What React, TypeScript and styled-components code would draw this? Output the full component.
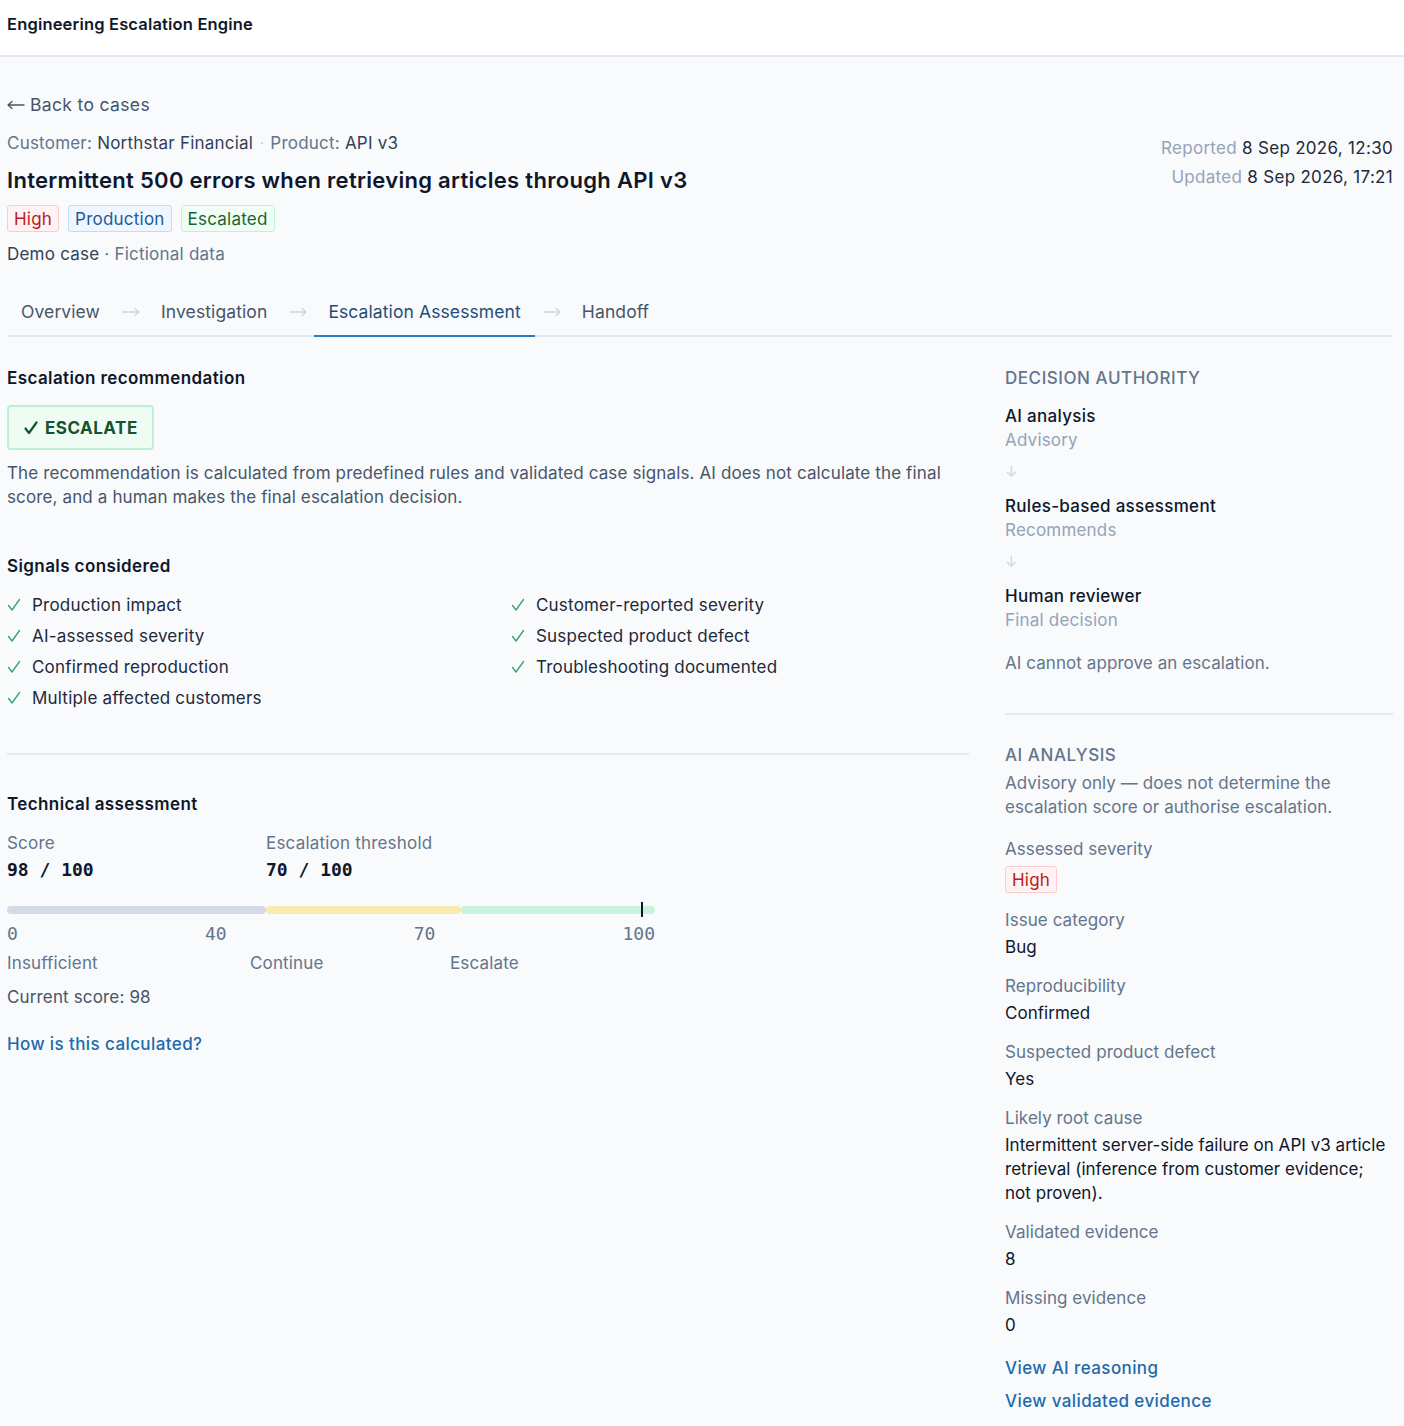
import React from 'react';
import styled, { createGlobalStyle, css } from 'styled-components';

const GlobalStyle = createGlobalStyle`
  * { box-sizing: border-box; }
  body {
    margin: 0;
    background: #f8fafc;
    font-family: Inter, "Noto Sans", sans-serif;
    font-size: 17px;
    line-height: 24px;
    letter-spacing: 0.15px;
    color: #0f172a;
  }
`;

const mono = `"DejaVu Sans Mono", "Liberation Mono", monospace`;

const TopBar = styled.header`
  background: #ffffff;
  border-bottom: 2px solid #e2e8f0;
  padding: 13px 11px 20px 7px;
  font-size: 16.5px;
  line-height: 22px;
  font-weight: 600;
  letter-spacing: 0.17px;
  color: #0f172a;
`;

const Page = styled.main`
  padding: 36px 11px 40px 7px;
`;

const BackLink = styled.a`
  display: flex;
  align-items: center;
  gap: 5px;
  color: #475569;
  text-decoration: none;
  font-size: 17.5px;
  letter-spacing: 0.35px;
`;

const ArrowSvg = styled.svg<{ $color: string }>`
  width: 18px;
  height: 10px;
  flex: none;
  stroke: ${({ $color }) => $color};
  fill: none;
  stroke-width: 1.3;
  stroke-linecap: round;
  stroke-linejoin: round;
`;

const CaseHead = styled.div`
  display: flex;
  justify-content: space-between;
  align-items: flex-start;
  margin-top: 14px;
`;

const CaseInfo = styled.div`
  display: flex;
  flex-direction: column;
  gap: 10px;
`;

const Meta = styled.div`
  color: #334155;
  letter-spacing: 0.22px;
`;

const MetaLabel = styled.span`
  color: #64748b;
`;

const Dot = styled.span`
  color: #cbd5e1;
  margin: 0 6px;
`;

const Title = styled.h1`
  margin: 0;
  font-size: 22px;
  line-height: 30px;
  font-weight: 600;
  letter-spacing: 0.3px;
  color: #0f172a;
`;

const Badges = styled.div`
  display: flex;
  gap: 9px;
`;

type Tone = 'red' | 'blue' | 'green';

const toneMap: Record<Tone, { bg: string; border: string; fg: string }> = {
  red: { bg: '#fef2f2', border: '#fecaca', fg: '#b91c1c' },
  blue: { bg: '#eff6ff', border: '#bfdbfe', fg: '#1e5a96' },
  green: { bg: '#f0fdf4', border: '#bbf7d0', fg: '#166534' },
};

const Badge = styled.span<{ $tone: Tone }>`
  display: inline-flex;
  align-items: center;
  height: 27px;
  padding: 0 6px;
  border-radius: 3px;
  font-size: 17px;
  letter-spacing: 0.22px;
  ${({ $tone }) => css`
    background: ${toneMap[$tone].bg};
    border: 1px solid ${toneMap[$tone].border};
    color: ${toneMap[$tone].fg};
  `}
`;

const DemoLine = styled.div`
  color: #64748b;
  letter-spacing: 0.22px;
`;

const DemoStrong = styled.span`
  color: #334155;
`;

const Dates = styled.div`
  display: flex;
  flex-direction: column;
  align-items: flex-end;
  gap: 5px;
  margin-top: 5px;
  color: #1e293b;
  letter-spacing: 0.3px;
`;

const DateLabel = styled.span`
  color: #94a3b8;
`;

const Tabs = styled.nav`
  display: flex;
  align-items: center;
  margin-top: 22px;
  border-bottom: 2px solid #e2e8f0;
`;

const Tab = styled.a<{ $active?: boolean }>`
  padding: 12px 14px 11px;
  margin-bottom: -2px;
  font-size: 17.5px;
  line-height: 24px;
  letter-spacing: 0.1px;
  text-decoration: none;
  color: ${({ $active }) => ($active ? '#1e4e79' : '#475569')};
  border-bottom: 2px solid ${({ $active }) => ($active ? '#2b7bc4' : 'transparent')};
`;

const TabArrow = styled.span`
  display: flex;
  margin: 0 7px 0 8px;
`;

const Body = styled.div`
  display: grid;
  grid-template-columns: 1fr 388px;
  gap: 36px;
  padding-top: 29px;
`;

const Left = styled.section`
  display: flex;
  flex-direction: column;
`;

const SectionTitle = styled.h2<{ $mt?: number }>`
  margin: ${({ $mt }) => $mt ?? 0}px 0 0;
  font-size: 17px;
  line-height: 24px;
  font-weight: 600;
  letter-spacing: 0.4px;
  color: #0f172a;
`;

const Verdict = styled.div`
  align-self: flex-start;
  margin-top: 15px;
  height: 45px;
  padding: 0 14px 0 15px;
  display: flex;
  align-items: center;
  gap: 7px;
  border: 2px solid #bbf0d3;
  border-radius: 4px;
  background: #effcf4;
  color: #14532d;
  font-weight: 700;
  font-size: 17px;
  letter-spacing: 0.5px;
`;

const CheckSvg = styled.svg<{ $color: string; $weight: number }>`
  width: 14px;
  height: 14px;
  flex: none;
  fill: none;
  stroke: ${({ $color }) => $color};
  stroke-width: ${({ $weight }) => $weight};
  stroke-linecap: round;
  stroke-linejoin: round;
`;

const Desc = styled.p`
  margin: 11px 0 0;
  color: #475569;
  letter-spacing: 0.13px;
`;

const Signals = styled.ul`
  list-style: none;
  margin: 15px 0 0;
  padding: 0;
  display: grid;
  grid-template-columns: 1fr 1fr;
  column-gap: 46px;
  row-gap: 7px;
`;

const Signal = styled.li`
  display: flex;
  align-items: center;
  gap: 11px;
  color: #1e293b;
  letter-spacing: 0.2px;
`;

const Divider = styled.hr<{ $mt: number; $mb: number }>`
  border: 0;
  border-top: 2px solid #e2e8f0;
  margin: ${({ $mt, $mb }) => `${$mt}px 0 ${$mb}px`};
`;

const Scores = styled.div`
  display: grid;
  grid-template-columns: 259px auto;
  margin-top: 15px;
`;

const ScoreLabel = styled.div`
  color: #64748b;
  letter-spacing: 0.2px;
`;

const ScoreValue = styled.div`
  margin-top: 3px;
  font-family: ${mono};
  font-weight: 700;
  font-size: 18px;
  letter-spacing: 0;
  color: #0f172a;
`;

const Meter = styled.div`
  width: 648px;
  margin-top: 24px;
`;

const Track = styled.div`
  position: relative;
  display: flex;
  height: 8px;
`;

const Zone = styled.div<{ $color: string; $w: number }>`
  width: ${({ $w }) => $w}%;
  background: ${({ $color }) => $color};
  border-radius: 4px;
`;

const Marker = styled.div`
  position: absolute;
  top: -4px;
  width: 2px;
  height: 15px;
  background: #0f172a;
  transform: translateX(-1px);
`;

const Ticks = styled.div`
  display: flex;
  justify-content: space-between;
  margin-top: 8px;
  font-family: ${mono};
  font-size: 18px;
  letter-spacing: 0;
  color: #64748b;
`;

const ZoneLabels = styled.div`
  display: grid;
  grid-template-columns: 243px 200px auto;
  margin-top: 5px;
  color: #64748b;
`;

const Current = styled.div`
  margin-top: 10px;
  color: #475569;
`;

const Link = styled.a<{ $mt: number }>`
  display: block;
  margin-top: ${({ $mt }) => $mt}px;
  color: #1d6aad;
  text-decoration: none;
  font-size: 17px;
  font-weight: 500;
  letter-spacing: 0.4px;
`;

const Right = styled.aside`
  display: flex;
  flex-direction: column;
  letter-spacing: 0.07px;
`;

const Eyebrow = styled.h3`
  margin: 0;
  font-size: 17px;
  line-height: 24px;
  font-weight: 500;
  letter-spacing: 0.55px;
  text-transform: uppercase;
  color: #64748b;
`;

const Authority = styled.div`
  display: flex;
  flex-direction: column;
  margin-top: 14px;
  gap: 8px;
`;

const Step = styled.div`
  display: flex;
  flex-direction: column;
`;

const StepName = styled.div`
  font-weight: 500;
  letter-spacing: 0.3px;
  color: #0f172a;
`;

const StepRole = styled.div`
  color: #94a3b8;
  letter-spacing: 0.2px;
`;

const DownArrow = styled.div`
  color: #cbd5e1;
  font-size: 15px;
  margin-bottom: 2px;
`;

const Note = styled.div<{ $mt: number }>`
  margin-top: ${({ $mt }) => $mt}px;
  color: #64748b;
`;

const Fields = styled.dl`
  margin: 18px 0 0;
  display: flex;
  flex-direction: column;
  gap: 15px;
`;

const Field = styled.div`
  display: flex;
  flex-direction: column;
  align-items: flex-start;
  gap: 3px;
`;

const FieldLabel = styled.dt`
  color: #64748b;
`;

const FieldValue = styled.dd`
  margin: 0;
  color: #0f172a;
  letter-spacing: 0.03px;
`;

const RightArrow = ({ color }: { color: string }) => (
  <ArrowSvg $color={color} viewBox="0 0 18 10">
    <path d="M1 5h16M13 1.5L17 5l-4 3.5" />
  </ArrowSvg>
);

const LeftArrow = ({ color }: { color: string }) => (
  <ArrowSvg $color={color} viewBox="0 0 18 10">
    <path d="M17 5H1M5 1.5L1 5l4 3.5" />
  </ArrowSvg>
);

const Tick = ({ color, weight }: { color: string; weight: number }) => (
  <CheckSvg $color={color} $weight={weight} viewBox="0 0 14 14">
    <path d="M1.5 7.5L5 12L12.5 1.5" />
  </CheckSvg>
);

const signals = [
  'Production impact',
  'Customer-reported severity',
  'AI-assessed severity',
  'Suspected product defect',
  'Confirmed reproduction',
  'Troubleshooting documented',
  'Multiple affected customers',
];

const fields: { label: string; value: string }[] = [
  { label: 'Issue category', value: 'Bug' },
  { label: 'Reproducibility', value: 'Confirmed' },
  { label: 'Suspected product defect', value: 'Yes' },
  {
    label: 'Likely root cause',
    value: 'Intermittent server-side failure on API v3 article retrieval (inference from customer evidence; not proven).',
  },
  { label: 'Validated evidence', value: '8' },
  { label: 'Missing evidence', value: '0' },
];

const tabs = ['Overview', 'Investigation', 'Escalation Assessment', 'Handoff'];
const activeTab = 'Escalation Assessment';
const score = 98;

export default function App() {
  return (
    <>
      <GlobalStyle />
      <TopBar>Engineering Escalation Engine</TopBar>
      <Page>
        <BackLink href="#">
          <LeftArrow color="#475569" />
          Back to cases
        </BackLink>
        <CaseHead>
          <CaseInfo>
            <Meta>
              <MetaLabel>Customer:</MetaLabel> Northstar Financial
              <Dot>·</Dot>
              <MetaLabel>Product:</MetaLabel> API v3
            </Meta>
            <Title>Intermittent 500 errors when retrieving articles through API v3</Title>
            <Badges>
              <Badge $tone="red">High</Badge>
              <Badge $tone="blue">Production</Badge>
              <Badge $tone="green">Escalated</Badge>
            </Badges>
            <DemoLine>
              <DemoStrong>Demo case</DemoStrong> · Fictional data
            </DemoLine>
          </CaseInfo>
          <Dates>
            <div>
              <DateLabel>Reported</DateLabel> 8 Sep 2026, 12:30
            </div>
            <div>
              <DateLabel>Updated</DateLabel> 8 Sep 2026, 17:21
            </div>
          </Dates>
        </CaseHead>

        <Tabs>
          {tabs.map((t, i) => (
            <React.Fragment key={t}>
              {i > 0 && (
                <TabArrow>
                  <RightArrow color="#cbd5e1" />
                </TabArrow>
              )}
              <Tab href="#" $active={t === activeTab}>
                {t}
              </Tab>
            </React.Fragment>
          ))}
        </Tabs>

        <Body>
          <Left>
            <SectionTitle>Escalation recommendation</SectionTitle>
            <Verdict>
              <Tick color="#14532d" weight={2.2} />
              ESCALATE
            </Verdict>
            <Desc>
              The recommendation is calculated from predefined rules and validated case signals. AI does not calculate the final score, and a human makes the final escalation decision.
            </Desc>

            <SectionTitle $mt={45}>Signals considered</SectionTitle>
            <Signals>
              {signals.map((s) => (
                <Signal key={s}>
                  <Tick color="#3aa56f" weight={1.4} />
                  {s}
                </Signal>
              ))}
            </Signals>

            <Divider $mt={43} $mb={37} />

            <SectionTitle>Technical assessment</SectionTitle>
            <Scores>
              <div>
                <ScoreLabel>Score</ScoreLabel>
                <ScoreValue>98 / 100</ScoreValue>
              </div>
              <div>
                <ScoreLabel>Escalation threshold</ScoreLabel>
                <ScoreValue>70 / 100</ScoreValue>
              </div>
            </Scores>

            <Meter>
              <Track>
                <Zone $w={40} $color="#d5dbe6" />
                <Zone $w={30} $color="#f8e9b0" />
                <Zone $w={30} $color="#c8f3dc" />
                <Marker style={{ left: `${score}%` }} />
              </Track>
              <Ticks>
                <span>0</span>
                <span>40</span>
                <span>70</span>
                <span>100</span>
              </Ticks>
              <ZoneLabels>
                <span>Insufficient</span>
                <span>Continue</span>
                <span>Escalate</span>
              </ZoneLabels>
            </Meter>
            <Current>Current score: {score}</Current>
            <Link href="#" $mt={23}>
              How is this calculated?
            </Link>
          </Left>

          <Right>
            <Eyebrow>Decision authority</Eyebrow>
            <Authority>
              <Step>
                <StepName>AI analysis</StepName>
                <StepRole>Advisory</StepRole>
              </Step>
              <DownArrow>↓</DownArrow>
              <Step>
                <StepName>Rules-based assessment</StepName>
                <StepRole>Recommends</StepRole>
              </Step>
              <DownArrow>↓</DownArrow>
              <Step>
                <StepName>Human reviewer</StepName>
                <StepRole>Final decision</StepRole>
              </Step>
            </Authority>
            <Note $mt={19}>AI cannot approve an escalation.</Note>

            <Divider $mt={38} $mb={28} />

            <Eyebrow>AI analysis</Eyebrow>
            <Note $mt={4}>Advisory only — does not determine the escalation score or authorise escalation.</Note>

            <Fields>
              <Field>
                <FieldLabel>Assessed severity</FieldLabel>
                <Badge $tone="red" style={{ marginTop: 2 }}>
                  High
                </Badge>
              </Field>
              {fields.map((f) => (
                <Field key={f.label}>
                  <FieldLabel>{f.label}</FieldLabel>
                  <FieldValue>{f.value}</FieldValue>
                </Field>
              ))}
            </Fields>

            <Link href="#" $mt={19}>
              View AI reasoning
            </Link>
            <Link href="#" $mt={9}>
              View validated evidence
            </Link>
          </Right>
        </Body>
      </Page>
    </>
  );
}
